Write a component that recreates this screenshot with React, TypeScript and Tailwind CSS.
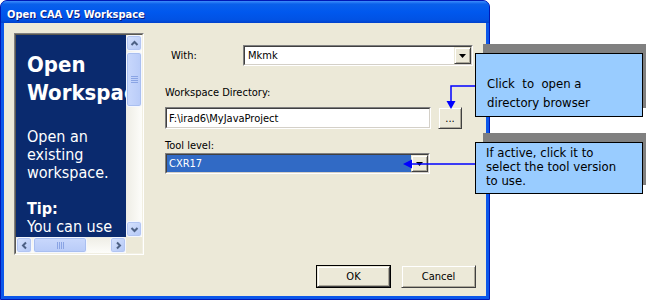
import React from "react"

const raised =
  "bg-[#ece9d8] border border-t-[#ece9d8] border-l-[#ece9d8] border-b-[#404040] border-r-[#404040] shadow-[inset_1px_1px_0_#ffffff,inset_-1px_-1px_0_#aca899]"

function Arrow() {
  return (
    <svg width="7" height="4" viewBox="0 0 7 4">
      <path d="M0 0h7L3.5 4z" fill="#000" />
    </svg>
  )
}

function DropBtn() {
  return (
    <div className={"w-[17px] h-full flex items-center justify-center " + raised}>
      <Arrow />
    </div>
  )
}

function Sunken({ className, children }: { className: string; children?: React.ReactNode }) {
  return (
    <div className={"border border-t-[#808080] border-l-[#808080] border-b-white border-r-white " + className}>
      <div className="h-full flex items-stretch bg-white border border-t-[#404040] border-l-[#404040] border-b-[#d4d0c8] border-r-[#d4d0c8]">
        {children}
      </div>
    </div>
  )
}

// xp style scroll arrow
function ScrollBtn({ dir }: { dir: "up" | "down" | "left" | "right" }) {
  const paths = {
    up: "M1.5 6L4.5 3L7.5 6",
    down: "M1.5 3L4.5 6L7.5 3",
    left: "M6 1.5L3 4.5L6 7.5",
    right: "M3 1.5L6 4.5L3 7.5",
  }
  return (
    <div className="w-[16px] h-[16px] shrink-0 flex items-center justify-center rounded-[3px] border border-[#f4f7fe] bg-[linear-gradient(135deg,#d6e2fd,#b4c8f6)] shadow-[inset_0_0_0_1px_#b2c5f2]">
      <svg width="9" height="9" viewBox="0 0 9 9">
        <path d={paths[dir]} fill="none" stroke="#4d6185" strokeWidth="2" />
      </svg>
    </div>
  )
}

function Grip({ vertical }: { vertical: boolean }) {
  return (
    <div className={vertical ? "flex flex-col gap-[1px]" : "flex flex-row gap-[1px]"}>
      {[0, 1, 2, 3].map((i) => (
        <div key={i} className={vertical ? "w-[7px] h-[1px] bg-[#8aa4e4]" : "w-[1px] h-[7px] bg-[#8aa4e4]"} />
      ))}
    </div>
  )
}

function LeftPanel() {
  return (
    <div className="w-[130px] h-[222px] shrink-0 border border-t-[#808080] border-l-[#808080] border-b-white border-r-white">
      <div className="w-[128px] h-[220px] border border-t-[#5a5850] border-l-[#5a5850] border-b-[#f1efe2] border-r-[#f1efe2] grid grid-cols-[110px_16px] grid-rows-[202px_16px]">
        <div className="bg-[#0a2a6e] text-white overflow-hidden whitespace-nowrap pl-[11px] pt-[16px]">
          <div className="text-[22px] leading-[28px] font-bold">Open</div>
          <div className="text-[22px] leading-[28px] font-bold">Workspace</div>
          <div className="mt-[21px] text-[16px] leading-[18px]">
            <div>Open an</div>
            <div>existing</div>
            <div>workspace.</div>
            <div className="h-[18px]" />
            <div className="font-bold">Tip:</div>
            <div>You can use</div>
          </div>
        </div>
        <div className="flex flex-col bg-[linear-gradient(to_right,#eeede5,#fdfdfa)]">
          <ScrollBtn dir="up" />
          <div className="mt-[1px] h-[55px] flex items-center justify-center rounded-[3px] border border-[#f4f7fe] bg-[linear-gradient(to_right,#c9d8fc,#b8cbf8)] shadow-[inset_0_0_0_1px_#a9bff0]">
            <Grip vertical />
          </div>
          <div className="flex-1" />
          <ScrollBtn dir="down" />
        </div>
        <div className="flex flex-row bg-[linear-gradient(to_bottom,#eeede5,#fdfdfa)]">
          <ScrollBtn dir="left" />
          <div className="ml-[1px] w-[54px] flex items-center justify-center rounded-[3px] border border-[#f4f7fe] bg-[linear-gradient(to_bottom,#c9d8fc,#b8cbf8)] shadow-[inset_0_0_0_1px_#a9bff0]">
            <Grip vertical={false} />
          </div>
          <div className="flex-1" />
          <ScrollBtn dir="right" />
        </div>
        <div className="bg-[#ece9d8]" />
      </div>
    </div>
  )
}

export default function App() {
  return (
    <div className="relative w-[646px] h-[303px] bg-white overflow-hidden font-['DejaVu_Sans_Condensed','DejaVu_Sans',sans-serif] text-[11px] leading-[13px] text-black">
      {/* dialog window */}
      <div className="w-[490px] h-[300px] flex flex-col rounded-t-[7px] border border-[#0019b5] bg-[#0b57ea] overflow-hidden">
        <div className="h-[22px] shrink-0 pl-[6px] pt-[7px] bg-[linear-gradient(to_bottom,#3d8dfc_0%,#0a60ea_14%,#0058ee_50%,#0152e4_85%,#0041cc_100%)]">
          <span className="font-bold text-white [text-shadow:1px_1px_0_#0a1a7a]">Open CAA V5 Workspace</span>
        </div>
        <div className="flex-1 px-[3px] pb-[3px]">
          <div className="h-[273px] bg-[#ece9d8] flex flex-row pt-[10px] pl-[10px] pr-[10px] pb-[8px]">
            <LeftPanel />

            <div className="ml-[21px] flex-1 flex flex-col pt-[12px]">
              <div className="h-[21px] flex flex-row items-center">
                <span className="ml-[6px] w-[72px]">With:</span>
                <Sunken className="w-[230px] h-[21px]">
                  <span className="flex-1 pl-[3px] flex items-center">Mkmk</span>
                  <DropBtn />
                </Sunken>
              </div>

              <div className="mt-[20px]">Workspace Directory:</div>
              <div className="mt-[8px] flex flex-row h-[22px]">
                <Sunken className="w-[266px] h-[22px]">
                  <span className="flex-1 pl-[2px] flex items-center">F:\irad6\MyJavaProject</span>
                </Sunken>
                <div className={"ml-[7px] w-[24px] h-[22px] flex items-end justify-center pb-[3px] " + raised}>...</div>
              </div>

              <div className="mt-[10px]">Tool level:</div>
              <Sunken className="mt-[1px] w-[265px] h-[21px]">
                <span className="flex-1 pl-[2px] flex items-center bg-[#316ac5] text-white">CXR17</span>
                <DropBtn />
              </Sunken>

              <div className="mt-auto flex flex-row justify-end gap-[10px]">
                <div className="w-[75px] h-[23px] border border-black">
                  <div className={"h-full flex items-center justify-center " + raised}>OK</div>
                </div>
                <div className={"w-[75px] h-[23px] flex items-center justify-center " + raised}>Cancel</div>
              </div>
            </div>
          </div>
        </div>
      </div>

      {/* callout connectors */}
      <svg className="absolute left-0 top-0 pointer-events-none" width="646" height="303">
        <polyline points="475,86 451,86 451,102" fill="none" stroke="#0000ff" strokeWidth="1.5" />
        <polygon points="446.5,101 455.5,101 451,109" fill="#0000ff" />
        <line x1="475" y1="164" x2="411" y2="164" stroke="#0000ff" strokeWidth="1.5" />
        <polygon points="412,159.5 412,168.5 403,164" fill="#0000ff" />
      </svg>

      {/* callout 1 */}
      <div className="absolute left-[483px] top-[44px] w-[168px] h-[64px] bg-[#808080]" />
      <div className="absolute left-[475px] top-[53px] w-[168px] h-[64px] bg-[#99ccff] border border-black pl-[11px] pt-[20px] text-[13px] leading-[19px] whitespace-pre">
        <div>Click  to  open a</div>
        <div>directory browser</div>
      </div>

      {/* callout 2 */}
      <div className="absolute left-[483px] top-[133px] w-[168px] h-[52px] bg-[#808080]" />
      <div className="absolute left-[475px] top-[142px] w-[168px] h-[52px] bg-[#99ccff] border border-black pl-[10px] pt-[3px] text-[13px] leading-[14px]">
        <div>If active, click it to</div>
        <div>select the tool version</div>
        <div>to use.</div>
      </div>
    </div>
  )
}
